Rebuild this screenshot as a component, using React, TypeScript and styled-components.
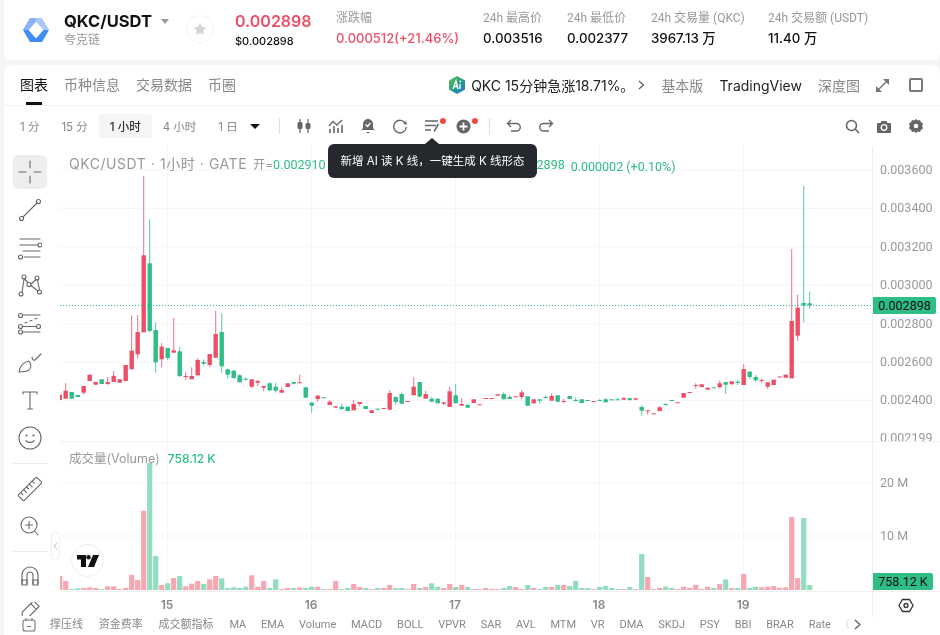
import React from 'react';
import styled, { createGlobalStyle } from 'styled-components';

const RED = '#ee4f66';
const GREEN = '#2ebd85';
const GREY = '#999';
const NARROW = 'Roboto, "Noto Sans CJK SC", sans-serif';

type Candle = [string, number, number, number?, number?];

// y values are page pixels: body top, body bottom, wick top, wick bottom
const candles: Candle[] = [
  ['r', 394.7, 400], ['r', 390.7, 398.7, 383], ['g', 392, 398.7], ['g', 395, 397], ['r', 386, 392.7, 386, 394.7],
  ['r', 374.7, 381], ['r', 382, 384.7], ['g', 379.3, 384], ['r', 382, 384, 377, 385], ['r', 376, 382, 371],
  ['r', 379.3, 382.7], ['r', 365, 381], ['r', 350.7, 369.3, 315.3], ['r', 332, 354.3, 315, 358.7], ['r', 255.3, 332.3, 176],
  ['g', 263.3, 331, 219.3, 332.3], ['g', 330, 362.3, 322.7, 372.7], ['r', 346.7, 359.3, 343, 367.3], ['g', 348, 358, 348, 360], ['r', 350.3, 352.7, 318],
  ['g', 351.3, 376, 346.7, 377], ['r', 376, 377, 372, 380], ['r', 376, 379.3, 367.3], ['r', 360, 375.3, 358], ['g', 362, 363.7, 359.3, 365.7],
  ['r', 354, 365, 354, 367.3], ['r', 334, 357.7, 310.7], ['g', 332, 366.3, 313.3, 372.7], ['g', 369.3, 374.7, 369, 378.7], ['g', 370.7, 378, 370, 379.3],
  ['g', 375.3, 382.3, 374.3], ['g', 378.7, 379.7, 377.3, 380.7], ['r', 379.3, 386.7, 379, 388], ['r', 381, 382.7, 380, 386], ['r', 386, 387.7, 386, 391.3],
  ['g', 383.3, 390.3, 382, 391.3], ['g', 386.7, 390.7, 382.7, 392.7], ['r', 390, 392.7, 387.3], ['r', 383.3, 387], ['g', 382, 383.7],
  ['r', 382.3, 383.3, 374.7], ['g', 387.3, 397.7], ['g', 402.7, 405.7, 402, 412.7], ['r', 395.7, 399, 395, 401.7],
  ['g', 397.3, 398], ['r', 401.7, 405, 400], ['r', 406.3, 407.7], ['g', 406.7, 409, 404, 410], ['g', 406.7, 411], ['r', 404, 410.3, 400],
  ['r', 402, 404, 402, 406], ['g', 406, 409], ['r', 410.3, 413], ['g', 408.7, 409.7], ['r', 408, 408.7], ['r', 393, 409.7, 390],
  ['g', 397, 402, 396.5, 404.7], ['g', 394, 403.7, 392.3], ['r', 401, 401.7], ['r', 386.7, 395.3, 377.3], ['g', 382, 396.7], ['r', 394, 398.7, 390.7],
  ['g', 398.7, 401.7, 397.3], ['g', 398.7, 403.3], ['r', 402.3, 403.7, 402, 405.3], ['r', 391.3, 407, 386.7], ['g', 395.3, 403, 384, 404], ['r', 404, 405.7, 398],
  ['g', 405, 407.7, 404], ['r', 399.3, 403], ['r', 404.3, 404.7], ['r', 398, 398.7], ['r', 398, 398.7], ['r', 394.3, 395.7],
  ['g', 394, 399.3, 392.3], ['g', 397, 399, 395.3], ['r', 396.3, 396.7], ['r', 392.3, 397, 390, 399.3], ['g', 396.3, 405.7], ['r', 399.3, 403.3],
  ['g', 399.3, 400.7, 399, 403.7], ['g', 397, 397.7, 395.3, 398.7], ['r', 396, 400.7, 393.3], ['g', 395.3, 401.7], ['r', 401, 401.7, 398.7, 403.3], ['g', 396, 399],
  ['g', 400, 400.7, 397.3, 401.7], ['g', 399.3, 403], ['g', 400, 400.4], ['r', 401, 401.7], ['g', 400, 400.7, 399.3, 401], ['g', 399.3, 402.3, 398.3],
  ['g', 399.3, 400.3], ['g', 399.3, 400, 397.3], ['r', 398, 399.7, 397.3], ['g', 398.3, 400, 398, 400.7], ['r', 398.3, 399.7],
  ['g', 407, 410.7, 405, 415.7], ['r', 410.3, 411.3, 410, 414.7], ['r', 413.3, 413.8], ['r', 407.3, 411, 406], ['g', 404, 404.7, 403.3, 405.7],
  ['g', 400, 400.5], ['r', 402.3, 402.8], ['r', 393, 397.7], ['r', 392, 392.5], ['r', 385, 385.7, 383.3, 388.7], ['r', 384.3, 387],
  ['r', 387.7, 389.7], ['g', 387.3, 387.8], ['r', 383.3, 387.3, 380.7, 388.3], ['g', 382, 384.7, 382, 394], ['r', 381.3, 384.3], ['g', 381.7, 383, 380, 385],
  ['r', 369, 385, 364], ['g', 371.7, 377, 371, 379.3], ['g', 377, 380.3, 375, 381.7], ['r', 380, 380.7, 378.7, 383.3], ['r', 382.3, 386.7, 382, 389], ['r', 379.7, 385],
  ['r', 376.5, 377], ['r', 374.7, 377.7], ['r', 321, 378.3, 249], ['r', 307.7, 335.7, 294.7, 341], ['g', 303, 305.3, 186, 322.3], ['g', 303.3, 305.3, 291.3, 308.7],
];

const volumes = [
  14, 9, 1, 1.7, 2, 2.7, 2, 1, 3.7, 3.7, 1, 2, 15, 10, 79.3, 127, 34, 5, 6.7, 12, 14, 3.7, 6.3, 9, 6, 10.7, 14, 11.7, 2, 2.7, 2, 3.3, 14.7, 3.3, 9, 2, 10.7, 1, 2, 2, 2.7, 2, 3.3, 3.3,
  1, 1, 9, 1, 2, 6, 3, 2, 1, 2, 2, 5, 2, 2, 1, 6, 2, 3, 6.7, 3.3, 2, 6, 3, 5, 3, 1, 1, 2, 1, 1, 2, 4, 3, 1, 5, 2, 1, 3, 3, 5, 5, 4, 9, 2, 2, 1, 3, 4, 2, 1, 1, 3, 1, 36,
  13, 1, 2, 3.3, 2, 1, 3.3, 2, 5, 1, 3.3, 2, 6, 10.7, 2, 2, 16, 2, 3.3, 2.7, 3.3, 4, 2.3, 2.7, 73, 12, 72, 5,
];

const stats = [
  { label: '24h 最高价', value: '0.003516' },
  { label: '24h 最低价', value: '0.002377' },
  { label: '24h 交易量 (QKC)', value: '3967.13 万' },
  { label: '24h 交易额 (USDT)', value: '11.40 万' },
];

const timeframes = ['1 分', '15 分', '1 小时', '4 小时', '1 日'];
const indicators = ['撑压线', '资金费率', '成交额指标', 'MA', 'EMA', 'Volume', 'MACD', 'BOLL', 'VPVR', 'SAR', 'AVL', 'MTM', 'VR', 'DMA', 'SKDJ', 'PSY', 'BBI', 'BRAR', 'Rate', 'CCI'];
const priceLevels = [
  ['0.003600', 170], ['0.003400', 208.4], ['0.003200', 246.8], ['0.003000', 285.2],
  ['0.002800', 323.6], ['0.002600', 362], ['0.002400', 400.4], ['0.002199', 438.4],
] as const;
const days = [['15', 167], ['16', 311], ['17', 455], ['18', 599], ['19', 743]] as const;

const Global = createGlobalStyle`
  html, body { margin: 0; padding: 0; height: 100%; overflow: hidden; }
  body { background: #f4f5f6; font-family: Inter, "Noto Sans CJK SC", sans-serif; color: #111; }
`;

const Page = styled.div`
  width: 940px;
  height: 635px;
  padding-left: 4px;
  box-sizing: border-box;
  overflow: hidden;
  filter: blur(0.25px);
`;

const Header = styled.header`
  height: 60px;
  margin-bottom: 5px;
  padding-left: 19px;
  background: #fff;
  border-radius: 0 0 8px 8px;
  display: grid;
  grid-template-columns: 41px 122px 49px 101px 147px 84px 84px 117px auto;
  align-items: center;
`;

const Symbol = styled.div`
  padding-bottom: 2px;
`;

const SymbolName = styled.div`
  display: flex;
  align-items: center;
  font-size: 16.5px;
  font-weight: 700;
  line-height: 22px;
`;

const Caret = styled.i<{ $color?: string; $size?: number }>`
  display: inline-block;
  border-style: solid;
  border-width: ${p => p.$size || 5}px ${p => (p.$size || 5) - 0.5}px 0;
  border-color: ${p => p.$color || '#999'} transparent transparent;
`;

const SymbolCaret = styled(Caret)`
  margin-left: 9px;
`;

const Muted = styled.div`
  font-family: ${NARROW};
  font-size: 12px;
  line-height: 16px;
  color: ${GREY};
`;

const StarCircle = styled.div`
  width: 26px;
  height: 26px;
  margin: 0 0 2px 0;
  border: 1px solid #f3f3f3;
  border-radius: 50%;
  display: flex;
  align-items: center;
  justify-content: center;
`;

const Stack = styled.div`
  padding-bottom: 3px;
  display: flex;
  flex-direction: column;
  gap: 3px;
`;

const PriceBlock = styled.div`
  padding-bottom: 2px;
  display: flex;
  flex-direction: column;
  gap: 2px;
`;

const LastPrice = styled.div`
  font-size: 16px;
  font-weight: 600;
  line-height: 22px;
  color: ${RED};
`;

const UsdPrice = styled.div`
  font-size: 11px;
  font-weight: 500;
  line-height: 14px;
`;

const Change = styled.div`
  font-size: 13px;
  font-weight: 500;
  line-height: 18px;
  color: ${RED};
`;

const StatValue = styled.div`
  font-size: 13.3px;
  font-weight: 500;
  line-height: 18px;
  white-space: nowrap;
`;

const Panel = styled.main`
  height: 570px;
  background: #fff;
  border-radius: 8px 8px 0 0;
  overflow: hidden;
`;

const TabBar = styled.nav`
  height: 40px;
  padding: 0 17px 0 16px;
  border-bottom: 1px solid #f1f1f1;
  display: flex;
  align-items: center;
  gap: 16px;
`;

const Tab = styled.div<{ $active?: boolean }>`
  position: relative;
  font-size: 14px;
  line-height: 40px;
  color: ${p => (p.$active ? '#111' : '#888')};
  &::after {
    content: '';
    display: ${p => (p.$active ? 'block' : 'none')};
    position: absolute;
    left: 6px;
    right: 6px;
    bottom: 0;
    height: 3px;
    background: #111;
  }
`;

const Ticker = styled.div`
  margin-left: auto;
  display: flex;
  align-items: center;
  gap: 6px;
  font-size: 14px;
  color: #222;
  white-space: nowrap;
`;

const Chevron = styled.span`
  margin-left: -2px;
  flex: none;
  display: flex;
`;

const Mode = styled.div<{ $active?: boolean }>`
  font-size: 14px;
  color: ${p => (p.$active ? '#222' : '#888')};
`;

const SquareButton = styled.div`
  width: 10px;
  height: 10px;
  margin-left: 4px;
  border: 2px solid #777;
  border-radius: 2px;
`;

const Toolbar = styled.div`
  height: 40px;
  padding: 0 8px 0 5px;
  display: flex;
  align-items: center;
`;

const Timeframe = styled.button<{ $active?: boolean }>`
  height: 24px;
  padding: 0 11px;
  border: 0;
  border-radius: 4px;
  font: ${p => (p.$active ? 500 : 400)} 11.5px Inter, "Noto Sans CJK SC", sans-serif;
  color: ${p => (p.$active ? '#333' : '#888')};
  background: ${p => (p.$active ? '#f5f5f5' : 'transparent')};
`;

const DownCaret = styled(Caret)`
  margin: 0 19px 0 1px;
`;

const ToolDivider = styled.div<{ $left?: number }>`
  width: 1px;
  height: 16px;
  margin: 0 8px 0 ${p => p.$left || 0}px;
  background: #ddd;
`;

const ToolIcon = styled.div`
  position: relative;
  width: 32px;
  height: 24px;
  display: flex;
  align-items: center;
  justify-content: center;
`;

const RedDot = styled.span`
  position: absolute;
  top: 4px;
  right: 2px;
  width: 6px;
  height: 6px;
  border-radius: 50%;
  background: #f0483e;
`;

const ToolSpacer = styled.div`
  flex: 1;
`;

const ChartArea = styled.section`
  height: 470px;
  display: flex;
`;

const Rail = styled.aside`
  flex: none;
  width: 56px;
  height: 470px;
  padding: 7px 4px 0 0;
  box-sizing: border-box;
  overflow: hidden;
  display: flex;
  flex-direction: column;
  align-items: center;
`;

const RailButton = styled.div<{ $active?: boolean }>`
  width: 34px;
  height: 34px;
  margin: 2px 0;
  flex: none;
  border-radius: 5px;
  background: ${p => (p.$active ? '#eeeeee' : 'transparent')};
  display: flex;
  align-items: center;
  justify-content: center;
`;

const RailDivider = styled.div<{ $top: number }>`
  width: 36px;
  height: 1px;
  flex: none;
  margin: ${p => p.$top}px 0;
  background: #eee;
`;

const ChartColumn = styled.div`
  position: relative;
  flex: 1;
  display: flex;
  flex-direction: column;
`;

const CandleSvg = styled.svg`
  display: block;
  flex: none;
  width: 880px;
  height: 295px;
  border-bottom: 1px solid #f0f0f0;
  font-family: ${NARROW};
`;

const VolumeSvg = styled.svg`
  display: block;
  flex: none;
  width: 880px;
  height: 149px;
  border-bottom: 1px solid #f0f0f0;
  font-family: ${NARROW};
`;

const TimeSvg = styled.svg`
  display: block;
  flex: none;
  width: 880px;
  height: 25px;
`;

const Legend = styled.div`
  position: absolute;
  left: 9px;
  top: 7px;
  display: flex;
  align-items: baseline;
  white-space: nowrap;
`;

const LegendTitle = styled.span`
  font-size: 14px;
  letter-spacing: 0.55px;
  color: ${GREY};
  margin-right: 6px;
`;

const LegendKey = styled.span`
  font-size: 12px;
  color: ${GREY};
`;

const LegendValue = styled.span`
  font-family: ${NARROW};
  font-size: 12.5px;
  color: ${GREEN};
`;

const TooltipGap = styled.span`
  display: inline-block;
  width: 211px;
`;

const LegendDelta = styled(LegendValue)`
  margin-left: 6px;
  position: relative;
  top: 2px;
`;

const Tooltip = styled.div`
  position: absolute;
  left: 268px;
  top: -2px;
  width: 209px;
  height: 34px;
  line-height: 34px;
  text-align: center;
  border-radius: 6px;
  background: #25282c;
  color: #fff;
  font-size: 11.5px;
  white-space: nowrap;
  &::before {
    content: '';
    position: absolute;
    left: 97px;
    top: -6px;
    border-style: solid;
    border-width: 0 7px 6px;
    border-color: transparent transparent #25282c;
  }
`;

const VolumeLegend = styled.div`
  position: absolute;
  left: 9px;
  top: 302px;
  display: flex;
  align-items: baseline;
  gap: 8px;
  white-space: nowrap;
`;

const VolumeTitle = styled.span`
  font-size: 12.5px;
  color: ${GREY};
`;

const VolumeValue = styled.span`
  font-size: 12px;
  font-weight: 500;
  color: ${GREEN};
`;

const PriceTag = styled.div<{ $top: number; $width: number }>`
  position: absolute;
  left: 813px;
  top: ${p => p.$top}px;
  width: ${p => p.$width}px;
  height: 17px;
  line-height: 17px;
  text-align: center;
  font-family: ${NARROW};
  font-size: 12.5px;
  color: #111;
  background: ${GREEN};
  border-radius: 0 2px 2px 0;
`;

const LogoBadge = styled.div`
  position: absolute;
  left: 11px;
  top: 398px;
  width: 33px;
  height: 33px;
  box-sizing: border-box;
  border: 1px solid #eee;
  border-radius: 50%;
  background: #fff;
  display: flex;
  align-items: center;
  justify-content: center;
`;

const CollapseHandle = styled.div`
  position: absolute;
  left: -9px;
  top: 386px;
  width: 7px;
  height: 26px;
  border: 1px solid #f0f0f0;
  border-radius: 4px;
  background: #fff;
  display: flex;
  align-items: center;
  justify-content: center;
`;

const IndicatorBar = styled.footer`
  height: 17px;
  padding-left: 18px;
  background: #fff;
  display: flex;
  align-items: center;
`;

const IndicatorList = styled.div`
  width: 802px;
  margin-left: 14px;
  display: flex;
  gap: 14.8px;
  overflow: hidden;
  mask-image: linear-gradient(to right, #000 98%, transparent 100%);
`;

const Indicator = styled.span`
  flex: none;
  font-family: ${NARROW};
  font-size: 11px;
  line-height: 17px;
  color: #888;
  &:nth-child(-n + 3) {
    margin-right: 1px;
  }
`;

const NextArrow = styled.span`
  margin-left: 2px;
  display: flex;
`;

const Stroke = ({ size = 24, children, color = '#666', width = 1.1 }: { size?: number; children: React.ReactNode; color?: string; width?: number }) => (
  <svg width={size} height={size} viewBox={`0 0 ${size} ${size}`} fill="none" stroke={color} strokeWidth={width} strokeLinecap="round" strokeLinejoin="round">
    {children}
  </svg>
);

const Logo = () => (
  <svg width="26" height="24" viewBox="0 0 26 24">
    <polygon points="7,0 19,0 26,12 20.5,12 13,3.5 5.5,12 0,12" fill="#a9c9fb" />
    <polygon points="7,0 13,0 13,3.5 5.5,12 0,12" fill="#86b3f9" />
    <polygon points="0,12 5.5,12 13,20.5 20.5,12 26,12 19,24 7,24" fill="#3f8cf6" />
    <polygon points="13,6 9,12 13,18 17,12" fill="#fff" />
  </svg>
);

const AiBadge = () => (
  <svg width="16" height="18" viewBox="0 0 16 18">
    <defs>
      <linearGradient id="ai" x1="0" y1="0" x2="1" y2="1">
        <stop offset="0" stopColor="#6cc24a" />
        <stop offset="0.55" stopColor="#1f9d8a" />
        <stop offset="1" stopColor="#2a6fdb" />
      </linearGradient>
    </defs>
    <polygon points="8,0 16,4.5 16,13.5 8,18 0,13.5 0,4.5" fill="url(#ai)" />
    <path d="M4 13 L7 5 L9 13 M5 10.5 H8.5 M11 8 V13" stroke="#fff" strokeWidth="1.4" fill="none" />
    <circle cx="11.3" cy="5.6" r="1" fill="#fff" />
  </svg>
);

const railIcons: React.ReactNode[] = [
  <path key="c" d="M1 12h7M16 12h7M12 1v7M12 16v7" />,
  <>
    <circle cx="20.5" cy="3.5" r="2" />
    <circle cx="3.5" cy="20.5" r="2" />
    <path d="M5 19 19 5" />
  </>,
  <>
    <path d="M2 3h20M2 9h18M5 15h17M6 21h16" />
    <circle cx="22" cy="9" r="2" />
    <circle cx="2.5" cy="21" r="2" />
  </>,
  <>
    <circle cx="6" cy="3" r="2" />
    <circle cx="19" cy="4" r="2" />
    <circle cx="3" cy="20" r="2" />
    <circle cx="21.5" cy="18" r="2" />
    <circle cx="11" cy="10.5" r="2" />
    <path d="M6.5 5 10 8.5M4 18.5 6 5M13 10l5-4.5M19.5 6l2 10M13 11.5l7 5.5" />
  </>,
  <>
    <circle cx="2.5" cy="3.5" r="2" />
    <circle cx="2.5" cy="14.5" r="2" />
    <circle cx="20.5" cy="14.5" r="2" />
    <circle cx="2.5" cy="20" r="2" />
    <path d="M5 3h17M5 14.500h13M5 20h17" />
    <path d="M7 11l2-.7M12 9l2-.7M17 7l2-.7" />
  </>,
  <>
    <path d="M1 22c1-6 5-10 10-11 2 3 3 5 1 8-2 2.500-7 3-11 3z" />
    <path d="M14 7c0 3 2 3.500 3 3l6-6" />
  </>,
  <path d="M5 6V4h14v2M12 4V21M9.500 21h5" />,
  <>
    <circle cx="12" cy="12" r="11" />
    <circle cx="8.500" cy="9.500" r=".5" />
    <circle cx="15.500" cy="9.500" r=".5" />
    <path d="M8 14.500c1 2.500 7 2.500 8 0" />
  </>,
];

const Ruler = () => (
  <Stroke>
    <g transform="rotate(-45 12 12)">
      <rect x="-1" y="8" width="26" height="8" rx="1" />
      <path d="M3 8v3M7 8v4M11 8v3M15 8v4M19 8v3" />
    </g>
  </Stroke>
);

const ZoomIcon = () => (
  <Stroke>
    <circle cx="11" cy="10" r="8" />
    <path d="M11 6.500v7M7.500 10h7M17 16.500 20 20" />
  </Stroke>
);

const Magnet = () => (
  <Stroke>
    <path d="M4 20V11a8 8 0 0 1 16 0v9M9 20V11a3 3 0 0 1 6 0v9" />
    <path d="M4 16h5v5H4zM15 16h5v5h-5z" />
  </Stroke>
);

const Pencil = () => (
  <Stroke>
    <g transform="translate(0 -4) rotate(45 12 12)">
      <path d="M8 3h8v16l-4 4-4-4zM8 7h8" />
    </g>
  </Stroke>
);

const CandleIcon = () => (
  <svg width="16" height="16" viewBox="0 0 16 16" fill="#666" stroke="#666">
    <path d="M4 1v14M12 1v14" strokeWidth="1.2" />
    <rect x="1.500" y="4" width="5" height="7" rx="1.500" stroke="none" />
    <rect x="9.500" y="5" width="5" height="6" rx="1.500" stroke="none" />
  </svg>
);

const IndicatorIcon = () => (
  <svg width="16" height="16" viewBox="0 0 16 16" fill="none" stroke="#666" strokeWidth="1.3">
    <path d="M1 8 5 3.500 9 7l5-5" />
    <path d="M2 11v4M6 8v7M10 10v5M14 7v8" strokeWidth="1.6" />
  </svg>
);

const BellIcon = () => (
  <svg width="16" height="16" viewBox="0 0 16 16">
    <path d="M8 1a5 5 0 0 0-5 5v4l-1.500 2h13L13 10V6a5 5 0 0 0-5-5z" fill="#666" />
    <path d="M6 14h4l-2 1.500z" fill="#666" />
    <path d="M5.500 6.500 7.500 8.500 10.500 5" stroke="#fff" strokeWidth="1.300" fill="none" />
  </svg>
);

const RefreshIcon = () => (
  <svg width="16" height="16" viewBox="0 0 16 16" fill="none" stroke="#666" strokeWidth="1.400">
    <path d="M13.500 5.500A6.300 6.300 0 1 0 14.300 9" />
    <path d="M15 6.500 11 6l3-3z" fill="#666" stroke="none" />
  </svg>
);

const ListPenIcon = () => (
  <svg width="16" height="16" viewBox="0 0 16 16" fill="none" stroke="#666" strokeWidth="1.500">
    <path d="M1 3h13M1 7.500h11M1 12h6M10 13.500 14.500 6" />
  </svg>
);

const PlusIcon = () => (
  <svg width="15" height="15" viewBox="0 0 15 15">
    <circle cx="7.500" cy="7.500" r="7" fill="#666" />
    <path d="M7.500 3.500v8M3.500 7.500h8" stroke="#fff" strokeWidth="1.800" />
  </svg>
);

const UndoIcon = ({ flip }: { flip?: boolean }) => (
  <svg width="16" height="14" viewBox="0 0 16 14" fill="none" stroke="#666" strokeWidth="1.400" style={flip ? { transform: 'scaleX(-1)' } : undefined}>
    <path d="M5 1 1.500 4.500 5 8M1.500 4.500H10.500a3.500 3.500 0 0 1 0 7.500H5" />
  </svg>
);

const SearchIcon = () => (
  <svg width="15" height="15" viewBox="0 0 15 15" fill="none" stroke="#666" strokeWidth="1.600">
    <circle cx="6.500" cy="6.500" r="5" />
    <path d="M10.300 10.300 14 14" />
  </svg>
);

const CameraIcon = () => (
  <svg width="14" height="13" viewBox="0 0 14 13">
    <path d="M4.500 1h5l1 2H13a1 1 0 0 1 1 1v8a1 1 0 0 1-1 1H1a1 1 0 0 1-1-1V4a1 1 0 0 1 1-1h2.500z" fill="#666" />
    <circle cx="7" cy="7.500" r="2.800" fill="none" stroke="#fff" strokeWidth="1.300" />
  </svg>
);

const GearIcon = () => (
  <svg width="14" height="14" viewBox="0 0 14 14">
    <path d="M7 0 8.800 1.500 11 1.100 12 3.200 14 4.500 13.200 7 14 9.500 12 10.800 11 12.900 8.800 12.500 7 14 5.200 12.500 3 12.900 2 10.800 0 9.500.8 7 0 4.500 2 3.200 3 1.100 5.200 1.500z" fill="#666" />
    <circle cx="7" cy="7" r="2.300" fill="#fff" />
  </svg>
);

const TvLogo = () => (
  <svg width="22" height="12" viewBox="0 0 22 12" fill="#111">
    <path d="M0 0h9v12H4V4.500H0z" />
    <circle cx="11.500" cy="2.200" r="2.200" />
    <path d="M16 0h6l-5 12h-6z" />
  </svg>
);

const CandlePane = () => (
  <CandleSvg viewBox="0 0 880 295">
    {priceLevels.slice(0, 7).map(([, y]) => (
      <line key={y} x1="0" x2="812" y1={y - 146} y2={y - 146} stroke="#f5f5f5" />
    ))}
    {days.map(([d, x]) => (
      <line key={d} x1={x - 59.5} x2={x - 59.5} y1="0" y2="295" stroke="#f5f5f5" />
    ))}
    {candles.map(([c, top, bottom, wickTop, wickBottom], i) => {
      const cx = -0.3 + 6 * i;
      const fill = c === 'r' ? RED : GREEN;
      return (
        <g key={i} fill={fill}>
          <rect x={cx - 0.5} y={(wickTop ?? top) - 146} width="1" height={(wickBottom ?? bottom) - (wickTop ?? top)} opacity="0.8" />
          <rect x={cx - 2.2} y={top - 146} width="4.4" height={Math.max(bottom - top, 1)} />
        </g>
      );
    })}
    <line x1="0" x2="812" y1="159.500" y2="159.500" stroke={GREEN} strokeDasharray="1 2" />
    <line x1="812.500" x2="812.500" y1="0" y2="295" stroke="#eee" />
    {priceLevels.map(([t, y]) => (
      <text key={t} x="820" y={y - 146 + 4} fontSize="12.500" fill={GREY}>{t}</text>
    ))}
  </CandleSvg>
);

const VolumePane = () => (
  <VolumeSvg viewBox="0 0 880 149">
    {[483, 536].map(y => (
      <line key={y} x1="0" x2="812" y1={y - 442} y2={y - 442} stroke="#f5f5f5" />
    ))}
    {days.map(([d, x]) => (
      <line key={d} x1={x - 59.5} x2={x - 59.5} y1="0" y2="149" stroke="#f5f5f5" />
    ))}
    {volumes.map((h, i) => (
      <rect key={i} x={-0.3 + 6 * i - 2.6} y={148 - h} width="5.200" height={h} fill={candles[i][0] === 'r' ? '#f7a7b1' : '#94dcbf'} />
    ))}
    <line x1="812.500" x2="812.500" y1="0" y2="149" stroke="#eee" />
    <text x="820" y="45" fontSize="12.500" fill={GREY}>20 M</text>
    <text x="820" y="98" fontSize="12.500" fill={GREY}>10 M</text>
  </VolumeSvg>
);

const TimePane = () => (
  <TimeSvg viewBox="0 0 880 25">
    <line x1="812.500" x2="812.500" y1="0" y2="25" stroke="#eee" />
    {days.map(([d, x]) => (
      <text key={d} x={x - 60} y="17" fontSize="12" fontWeight="600" fill="#888" textAnchor="middle">{d}</text>
    ))}
    <g fill="none" stroke="#333" strokeWidth="1.300">
      <polygon points="839,13.500 842.500,7.500 849.500,7.500 853,13.500 849.500,19.500 842.500,19.500" />
      <circle cx="846" cy="13.500" r="2" />
    </g>
  </TimeSvg>
);

export default function App() {
  return (
    <>
      <Global />
      <Page>
        <Header>
          <Logo />
          <Symbol>
            <SymbolName>QKC/USDT<SymbolCaret /></SymbolName>
            <Muted>夸克链</Muted>
          </Symbol>
          <StarCircle>
            <svg width="14" height="14" viewBox="0 0 24 24" fill="#d4d4d4">
              <path d="M12 1.500l3.300 6.900 7.500 1-5.500 5.200 1.400 7.500L12 18.500l-6.700 3.600 1.400-7.500L1.200 9.400l7.500-1z" />
            </svg>
          </StarCircle>
          <PriceBlock>
            <LastPrice>0.002898</LastPrice>
            <UsdPrice>$0.002898</UsdPrice>
          </PriceBlock>
          <Stack>
            <Muted>涨跌幅</Muted>
            <Change>0.000512(+21.46%)</Change>
          </Stack>
          {stats.map(s => (
            <Stack key={s.label}>
              <Muted>{s.label}</Muted>
              <StatValue>{s.value}</StatValue>
            </Stack>
          ))}
        </Header>
        <Panel>
          <TabBar>
            <Tab $active>图表</Tab>
            <Tab>币种信息</Tab>
            <Tab>交易数据</Tab>
            <Tab>币圈</Tab>
            <Ticker>
              <AiBadge />
              QKC 15分钟急涨18.71%。
              <Chevron>
                <svg width="7" height="10" viewBox="0 0 7 10" fill="none" stroke="#555" strokeWidth="1.100"><path d="M1 1l4.500 4L1 9" /></svg>
              </Chevron>
            </Ticker>
            <Mode>基本版</Mode>
            <Mode $active>TradingView</Mode>
            <Mode>深度图</Mode>
            <svg width="13" height="13" viewBox="0 0 13 13" fill="#777">
              <path d="M8 0h5v5zM0 13V8l5 5zM10 3 3 10" stroke="#777" strokeWidth="1.500" />
            </svg>
            <SquareButton />
          </TabBar>
          <Toolbar>
            {timeframes.map(t => (
              <Timeframe key={t} $active={t === '1 小时'}>{t}</Timeframe>
            ))}
            <DownCaret $color="#111" $size={5.5} />
            <ToolDivider />
            <ToolIcon><CandleIcon /></ToolIcon>
            <ToolIcon><IndicatorIcon /></ToolIcon>
            <ToolIcon><BellIcon /></ToolIcon>
            <ToolIcon><RefreshIcon /></ToolIcon>
            <ToolIcon><ListPenIcon /><RedDot /></ToolIcon>
            <ToolIcon><PlusIcon /><RedDot /></ToolIcon>
            <ToolDivider $left={9} />
            <ToolIcon><UndoIcon /></ToolIcon>
            <ToolIcon><UndoIcon flip /></ToolIcon>
            <ToolSpacer />
            <ToolIcon><SearchIcon /></ToolIcon>
            <ToolIcon><CameraIcon /></ToolIcon>
            <ToolIcon><GearIcon /></ToolIcon>
          </Toolbar>
          <ChartArea>
            <Rail>
              {railIcons.map((icon, i) => (
                <RailButton key={i} $active={i === 0}><Stroke>{icon}</Stroke></RailButton>
              ))}
              <RailDivider $top={6} />
              <RailButton><Ruler /></RailButton>
              <RailButton><ZoomIcon /></RailButton>
              <RailDivider $top={5} />
              <RailButton><Magnet /></RailButton>
              <RailButton><Pencil /></RailButton>
            </Rail>
            <ChartColumn>
              <CandlePane />
              <VolumePane />
              <TimePane />
              <Legend>
                <LegendTitle>QKC/USDT · 1小时 · GATE</LegendTitle>
                <LegendKey>开=</LegendKey>
                <LegendValue>0.002910</LegendValue>
                <TooltipGap />
                <LegendValue>2898</LegendValue>
                <LegendDelta>0.000002 (+0.10%)</LegendDelta>
              </Legend>
              <Tooltip>新增 AI 读 K 线，一键生成 K 线形态</Tooltip>
              <VolumeLegend>
                <VolumeTitle>成交量(Volume)</VolumeTitle>
                <VolumeValue>758.12 K</VolumeValue>
              </VolumeLegend>
              <PriceTag $top={151} $width={63}>0.002898</PriceTag>
              <PriceTag $top={427} $width={60}>758.12 K</PriceTag>
              <LogoBadge><TvLogo /></LogoBadge>
              <CollapseHandle>
                <svg width="5" height="8" viewBox="0 0 5 8" fill="none" stroke="#bbb"><path d="M4 0.500 1 4l3 3.500" /></svg>
              </CollapseHandle>
            </ChartColumn>
          </ChartArea>
          <IndicatorBar>
            <svg width="14" height="14" viewBox="0 0 14 14" fill="none" stroke="#777" strokeWidth="1.100">
              <rect x="1" y="2" width="12" height="11" rx="2" />
              <path d="M4 0v3M10 0v3M5 8.500h4" />
            </svg>
            <IndicatorList>
              {indicators.map(n => (
                <Indicator key={n}>{n}</Indicator>
              ))}
            </IndicatorList>
            <NextArrow>
              <svg width="7" height="11" viewBox="0 0 7 11" fill="none" stroke="#555" strokeWidth="1.100"><path d="M1 1l5 4.500L1 10" /></svg>
            </NextArrow>
          </IndicatorBar>
        </Panel>
      </Page>
    </>
  );
}
